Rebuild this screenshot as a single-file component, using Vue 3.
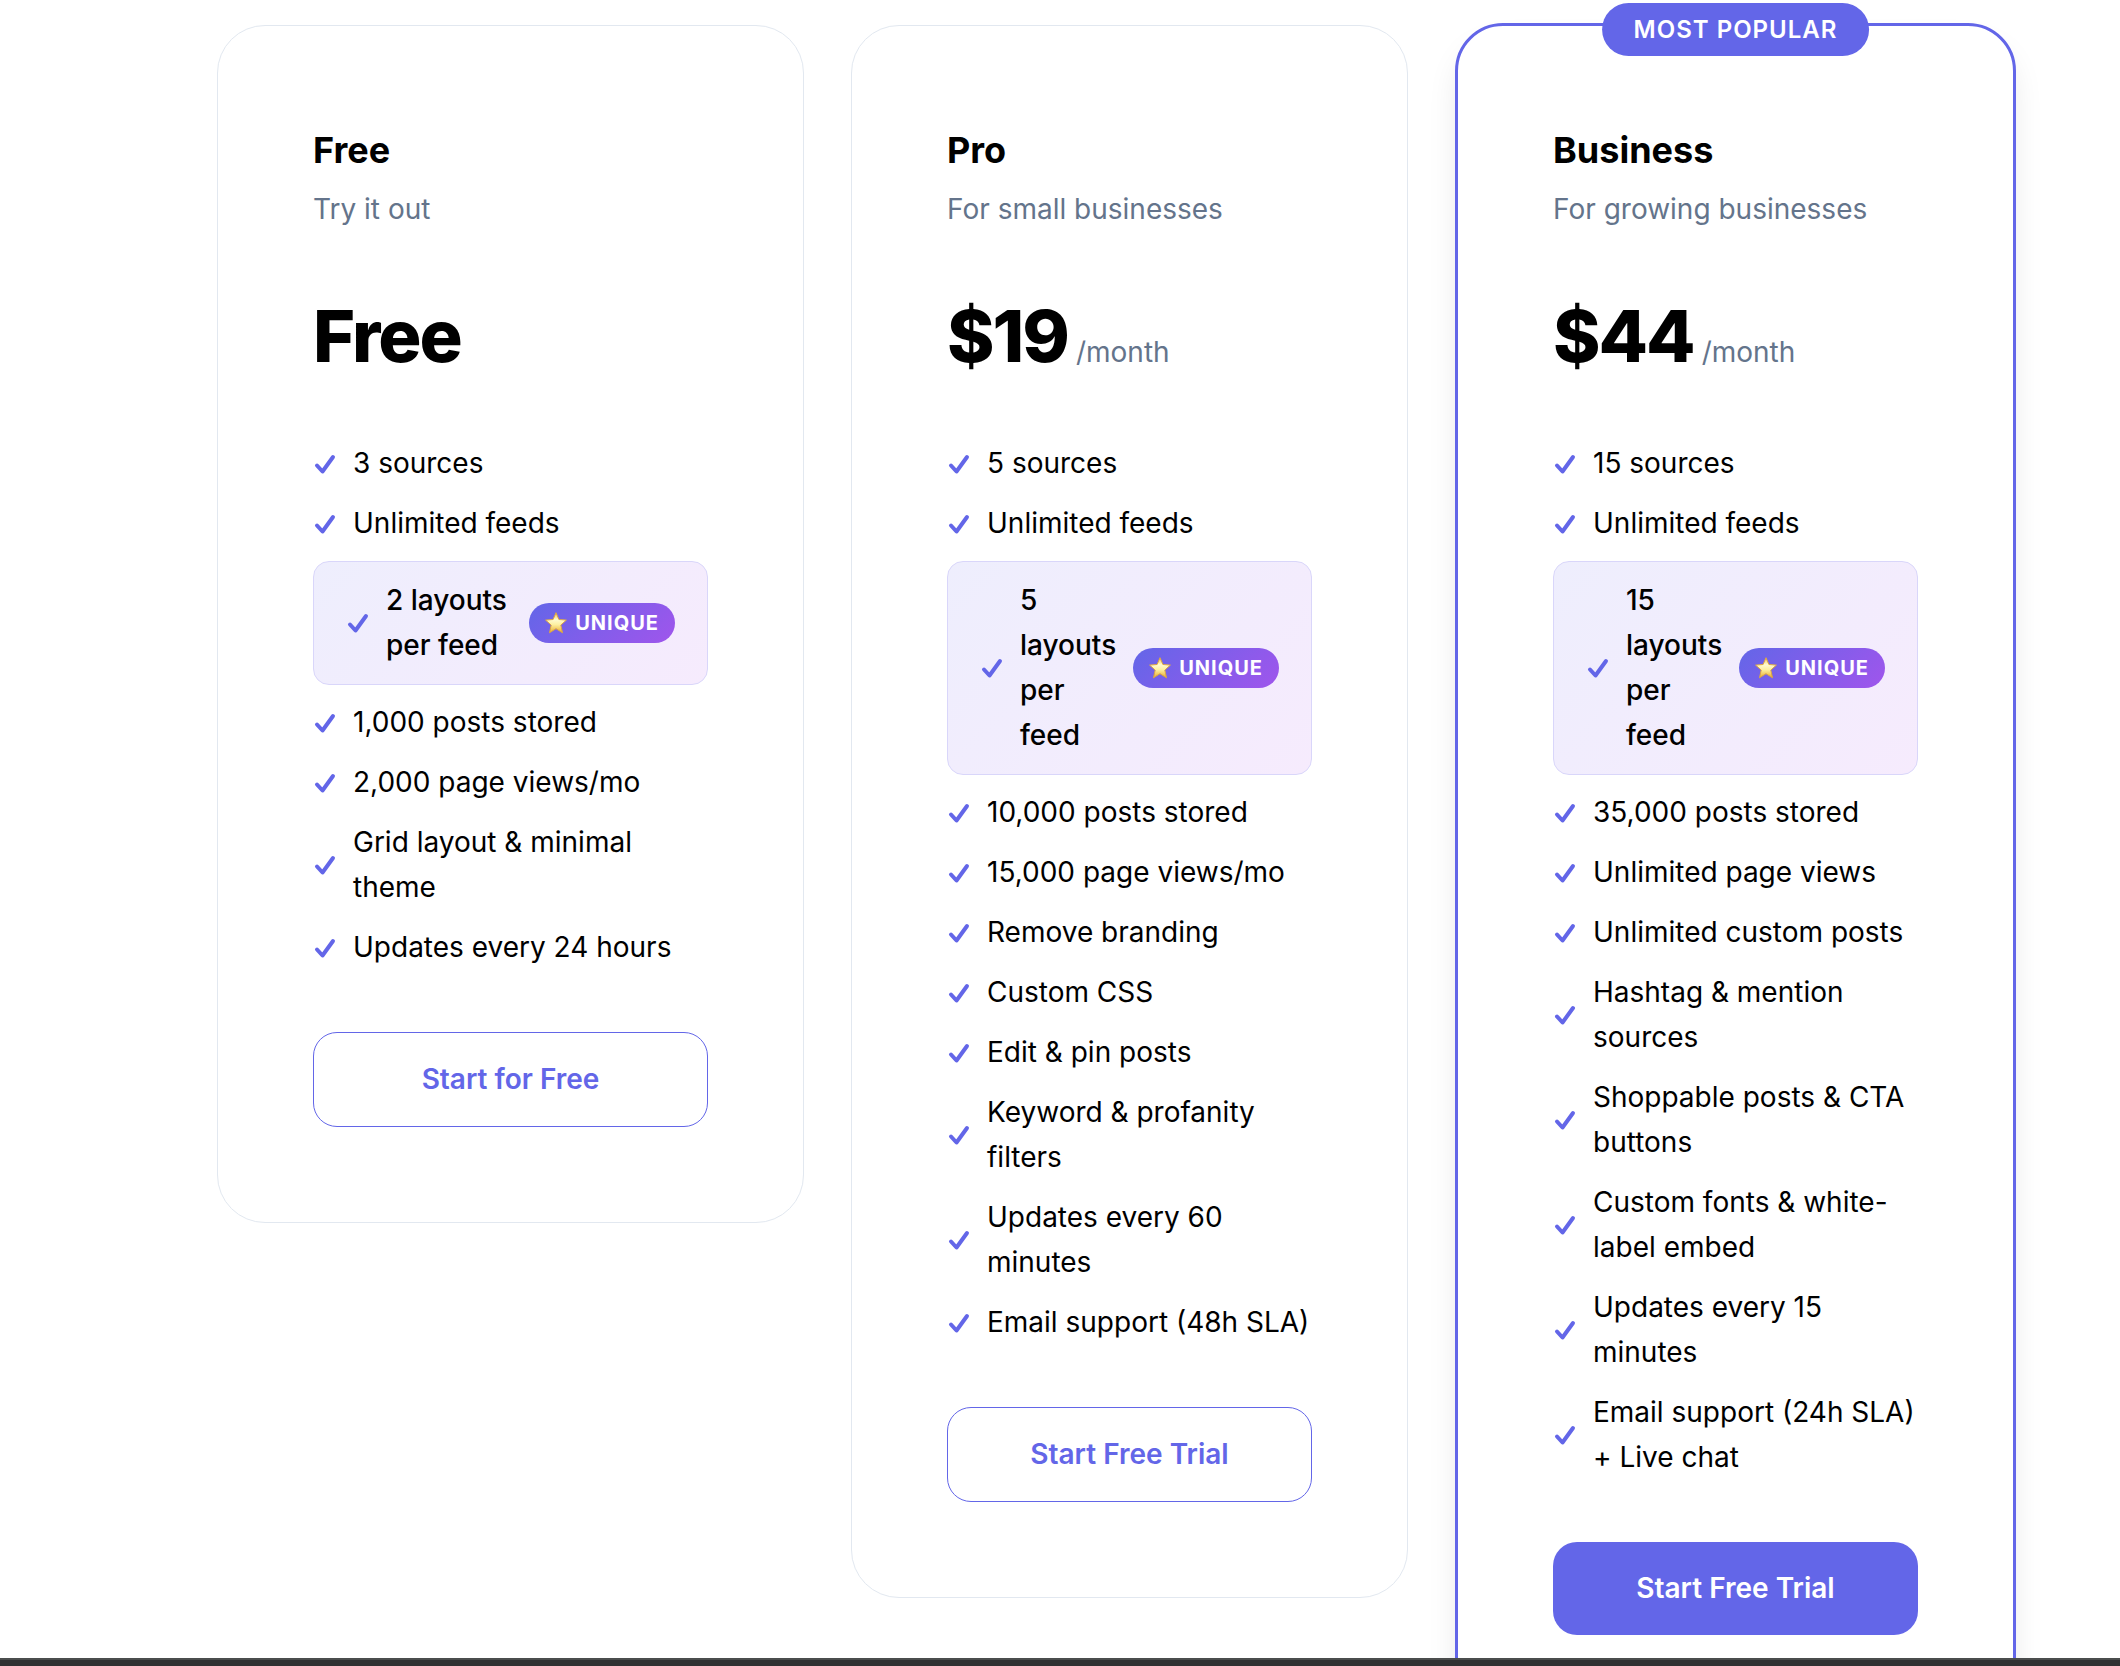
<script setup>
const plans = [
  {
    name: 'Free',
    tagline: 'Try it out',
    price: 'Free',
    cta: 'Start for Free',
    features: [
      { text: '3 sources' },
      { text: 'Unlimited feeds' },
      { text: '2 layouts per feed', unique: true },
      { text: '1,000 posts stored' },
      { text: '2,000 page views/mo' },
      { text: 'Grid layout & minimal theme' },
      { text: 'Updates every 24 hours' },
    ],
  },
  {
    name: 'Pro',
    tagline: 'For small businesses',
    price: '$19',
    period: '/month',
    cta: 'Start Free Trial',
    features: [
      { text: '5 sources' },
      { text: 'Unlimited feeds' },
      { text: '5 layouts per feed', unique: true },
      { text: '10,000 posts stored' },
      { text: '15,000 page views/mo' },
      { text: 'Remove branding' },
      { text: 'Custom CSS' },
      { text: 'Edit & pin posts' },
      { text: 'Keyword & profanity filters' },
      { text: 'Updates every 60 minutes' },
      { text: 'Email support (48h SLA)' },
    ],
  },
  {
    name: 'Business',
    tagline: 'For growing businesses',
    price: '$44',
    period: '/month',
    cta: 'Start Free Trial',
    popular: true,
    features: [
      { text: '15 sources' },
      { text: 'Unlimited feeds' },
      { text: '15 layouts per feed', unique: true },
      { text: '35,000 posts stored' },
      { text: 'Unlimited page views' },
      { text: 'Unlimited custom posts' },
      { text: 'Hashtag & mention sources' },
      { text: 'Shoppable posts & CTA buttons' },
      { text: 'Custom fonts & white-label embed' },
      { text: 'Updates every 15 minutes' },
      { text: 'Email support (24h SLA) + Live chat' },
    ],
  },
]
</script>

<template>
  <div class="page">
    <main class="pricing">
      <article v-for="plan in plans" :key="plan.name" class="card" :class="{ popular: plan.popular }">
        <span v-if="plan.popular" class="ribbon">MOST POPULAR</span>
        <h2 class="name">{{ plan.name }}</h2>
        <p class="tagline">{{ plan.tagline }}</p>
        <p class="price">
          <span class="amount">{{ plan.price }}</span>
          <span v-if="plan.period" class="period">{{ plan.period }}</span>
        </p>
        <ul class="features">
          <li v-for="f in plan.features" :key="f.text" class="feature" :class="{ highlight: f.unique }">
            <svg class="check" viewBox="0 0 24 24" aria-hidden="true">
              <path d="M4 13.5 9.5 19.5 20 5" />
            </svg>
            <span class="label">{{ f.text }}</span>
            <span v-if="f.unique" class="unique">
              <svg class="star" viewBox="1 1 22 22" aria-hidden="true">
                <defs>
                  <linearGradient :id="'star-' + plan.name" x1="0" y1="0" x2="0" y2="1">
                    <stop offset="0" stop-color="#f3c24a" />
                    <stop offset="0.35" stop-color="#fffbd0" />
                    <stop offset="0.6" stop-color="#fdf0a0" />
                    <stop offset="1" stop-color="#e9a92c" />
                  </linearGradient>
                </defs>
                <path
                  :fill="'url(#star-' + plan.name + ')'"
                  stroke="#dca643"
                  stroke-linejoin="round"
                  d="M12 1.7 14.9 8.5 22.4 9.1 16.8 14.1 18.5 21.8 12 17.7 5.5 21.8 7.2 14.1 1.6 9.1 9.1 8.5Z"
                />
              </svg>
              UNIQUE
            </span>
          </li>
        </ul>
        <button type="button" class="cta">{{ plan.cta }}</button>
      </article>
    </main>
    <footer class="edge"></footer>
  </div>
</template>

<style>
body {
  margin: 0;
}
</style>

<style scoped>
.page {
  display: flex;
  flex-direction: column;
  height: 100vh;
  background: #fff;
  color: #000;
  font-family: Inter, "Liberation Sans", sans-serif;
  font-size: 28px;
  line-height: 45px;
}
.pricing {
  flex: 1;
  min-height: 0;
  overflow: hidden;
  display: grid;
  grid-template-columns: 587fr 557fr 561fr;
  align-items: start;
  gap: 47px;
  padding: 25px 104px 0 217px;
}
.card {
  position: relative;
  box-sizing: border-box;
  padding: 95px;
  border: 1px solid #e2e8f0;
  border-radius: 48px;
  background: #fff;
}
.popular {
  margin-top: -2px;
  border: 3px solid #6366e8;
  box-shadow: 0 20px 32px -4px rgba(0, 0, 0, 0.1);
}
.ribbon {
  position: absolute;
  top: -23px;
  left: 50%;
  transform: translateX(-50%);
  padding: 4px 32px;
  border-radius: 32px;
  background: #6366e8;
  color: #fff;
  font-size: 24px;
  font-weight: 600;
  letter-spacing: 1px;
  white-space: nowrap;
}
.name {
  margin: 0;
  font-size: 36px;
  font-weight: 700;
  line-height: 58px;
}
.tagline {
  margin: 8px 0 0;
  color: #64748b;
}
.price {
  display: flex;
  align-items: baseline;
  gap: 8px;
  margin: 64px 0 65px;
}
.amount {
  font-size: 72px;
  font-weight: 800;
  line-height: 80px;
  letter-spacing: -2px;
}
.period {
  color: #64748b;
}
.features {
  display: flex;
  flex-direction: column;
  gap: 15px;
  margin: 0 0 62px;
  padding: 0;
  list-style: none;
}
.feature {
  display: flex;
  align-items: center;
  gap: 16px;
}
.highlight {
  padding: 16px 32px;
  border: 1px solid #d9d6fa;
  border-radius: 16px;
  background: linear-gradient(135deg, #eeeefd, #f6ebfd);
  font-weight: 500;
}
.check {
  flex: none;
  width: 24px;
  height: 24px;
  fill: none;
  stroke: #6366e8;
  stroke-width: 4;
  stroke-linecap: round;
  stroke-linejoin: round;
}
.highlight .label {
  flex: 1;
}
.unique {
  flex: none;
  display: flex;
  align-items: center;
  gap: 8px;
  padding: 4px 16px;
  border-radius: 20px;
  background: linear-gradient(135deg, #6366e8, #a055ec);
  color: #fff;
  font-size: 20px;
  font-weight: 700;
  line-height: 32px;
  letter-spacing: 1px;
}
.star {
  width: 22px;
  height: 22px;
}
.cta {
  display: block;
  width: 100%;
  padding: 24px;
  border: 1px solid #6366e8;
  border-radius: 24px;
  background: #fff;
  color: #6366e8;
  font: inherit;
  font-weight: 600;
}
.popular .cta {
  border: 0;
  background: #6366e8;
  color: #fff;
}
.edge {
  flex: none;
  height: 6px;
  border-top: 2px solid #4b4d4d;
  background: #303132;
}
</style>
